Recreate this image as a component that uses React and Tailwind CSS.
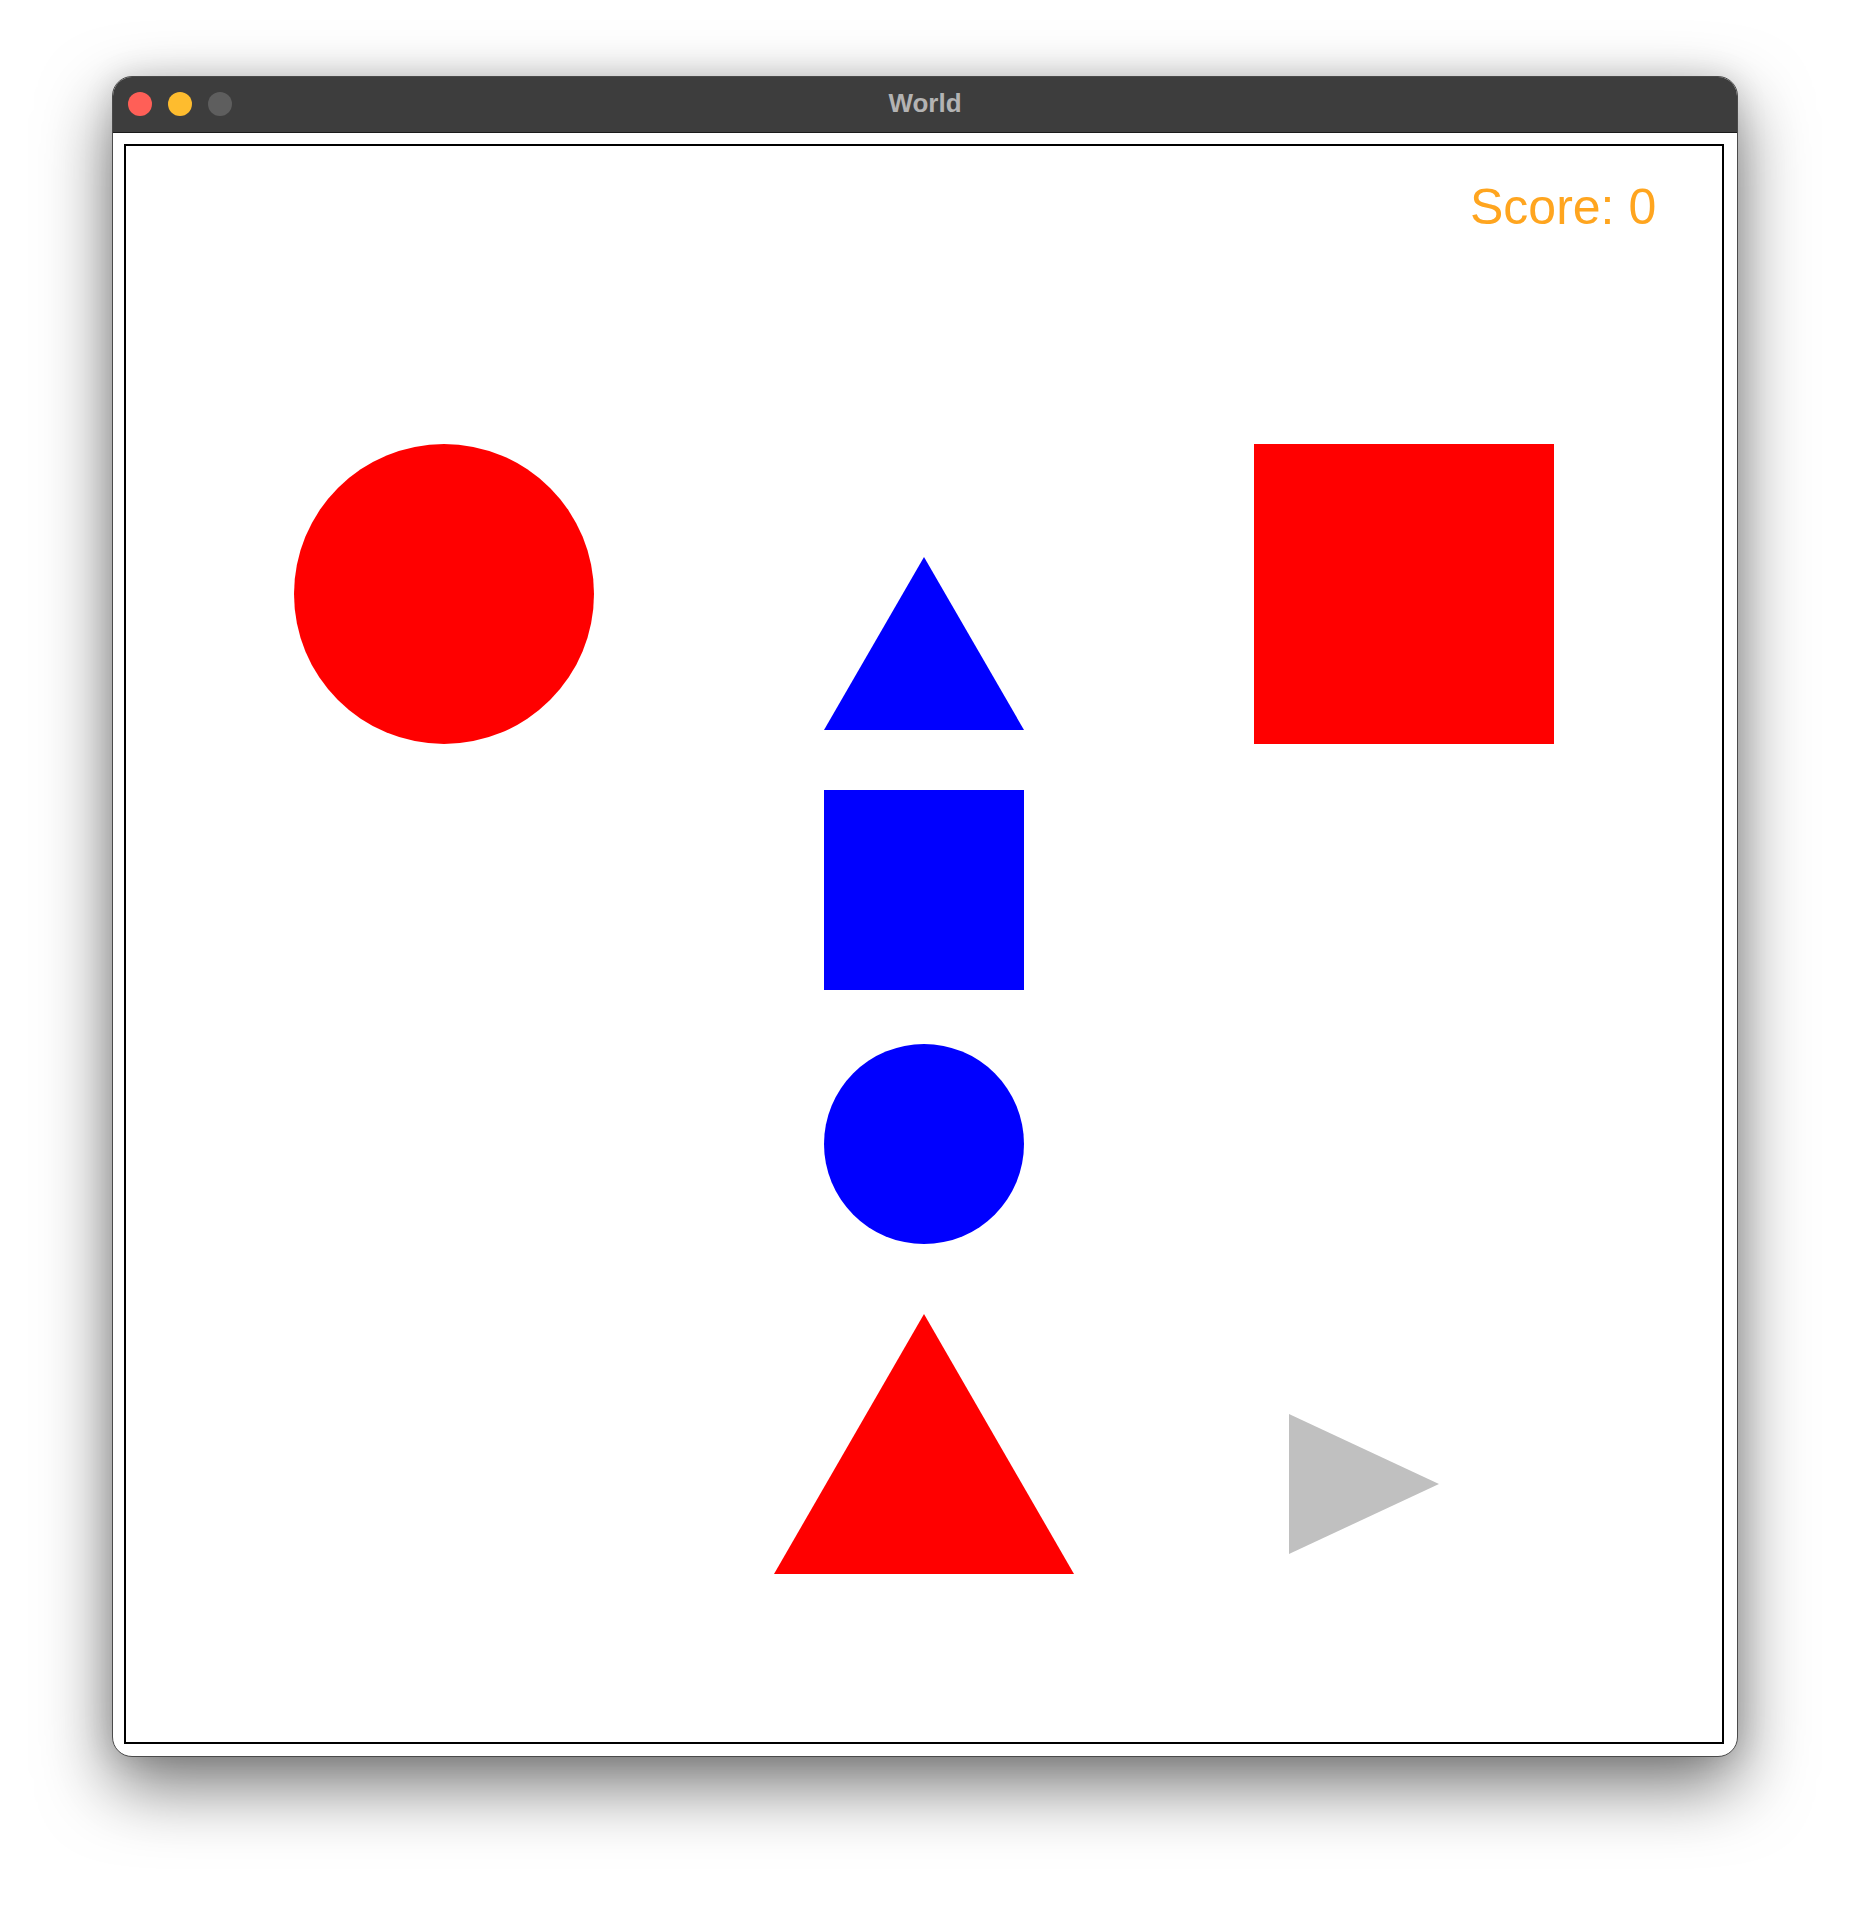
const shapes = {
  red: "#ff0000",
  blue: "#0000ff",
  gray: "#c0c0c0",
};

const TrafficLights = () => (
  <div className="flex items-center gap-[16px]">
    <span className="block w-[24px] h-[24px] rounded-full bg-[#ff5f57]" />
    <span className="block w-[24px] h-[24px] rounded-full bg-[#febc2e]" />
    <span className="block w-[24px] h-[24px] rounded-full bg-[#5e5e5e]" />
  </div>
);

// canvas drawing, coordinates relative to the outer edge of the framed canvas
const Scene = () => (
  <svg
    className="absolute left-[-2px] top-[-2px]"
    width="1600"
    height="1600"
    viewBox="0 0 1600 1600"
  >
    <circle cx="320" cy="450" r="150" fill={shapes.red} />
    <rect x="1130" y="300" width="300" height="300" fill={shapes.red} />
    <polygon points="800,413 700,586 900,586" fill={shapes.blue} />
    <rect x="700" y="646" width="200" height="200" fill={shapes.blue} />
    <circle cx="800" cy="1000" r="100" fill={shapes.blue} />
    <polygon points="800,1170 650,1430 950,1430" fill={shapes.red} />
    <polygon points="1165,1270 1315,1340 1165,1410" fill={shapes.gray} />
  </svg>
);

export default function App() {
  return (
    <div
      className="w-[1850px] h-[1906px] bg-white pt-[76px] pl-[112px]"
      style={{ fontFamily: '"Liberation Sans", Arial, sans-serif' }}
    >
      <div className="w-[1626px] rounded-[20px] border border-[#4a4a4a] overflow-hidden bg-white shadow-[0_28px_70px_rgba(0,0,0,0.55),0_0_30px_rgba(0,0,0,0.12)]">
        {/* title bar */}
        <div className="relative h-[56px] bg-[#3d3d3d] border-b border-[#1a1a1a] flex items-center pl-[15px] pb-[2px]">
          <TrafficLights />
          <div className="absolute inset-0 flex items-center justify-center pb-[4px] text-[26px] font-bold text-[#b3b3b3] leading-none">
            World
          </div>
        </div>

        {/* content */}
        <div className="pt-[11px] pl-[11px] pr-[13px] pb-[12px]">
          <div className="relative w-[1600px] h-[1600px] border-2 border-black bg-white">
            <Scene />
            <div className="absolute left-[1344px] top-[36px] text-[50px] leading-none text-[#ffa51f] whitespace-nowrap">
              Score: 0
            </div>
          </div>
        </div>
      </div>
    </div>
  );
}
